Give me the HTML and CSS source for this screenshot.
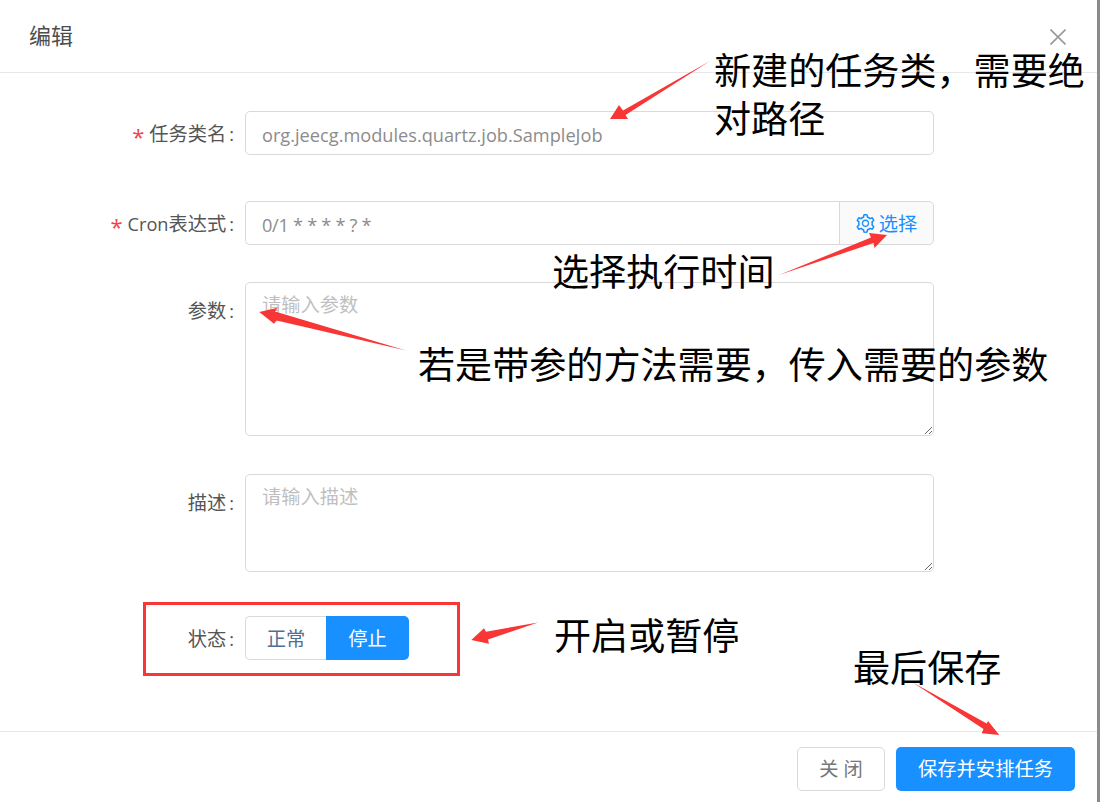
FILE: index.html
```html
<!DOCTYPE html>
<html lang="zh-CN">
<head>
<meta charset="utf-8">
<title>编辑</title>
<link rel="stylesheet" href="styles.css">
</head>
<body>
<div class="shot">
  <section class="modal">
    <header class="modal-head">
      <h1 class="modal-title">编辑</h1>
      <svg class="close-icon" viewBox="0 0 16 16" aria-label="关闭"><path d="M.5.5l15 15M15.500.5l-15 15"/></svg>
    </header>
    <div class="modal-body">
      <div class="row row-first">
        <div class="label"><span class="req">*</span>任务类名<span class="colon">:</span></div>
        <div class="field input value">org.jeecg.modules.quartz.job.SampleJob</div>
      </div>
      <div class="row row-cron">
        <div class="label"><span class="req">*</span><span class="latin">Cron</span>表达式<span class="colon">:</span></div>
        <div class="input-group">
          <div class="field input value joined">0/1 * * * * ? *</div>
          <div class="addon">
            <svg class="gear" viewBox="64 64 896 896"><path d="M924.8 625.7l-65.5-56c3.1-19 4.7-38.4 4.7-57.8s-1.6-38.8-4.7-57.8l65.5-56a32.03 32.03 0 0 0 9.3-35.2l-.9-2.6a443.74 443.74 0 0 0-79.7-137.9l-1.8-2.1a32.12 32.12 0 0 0-35.1-9.5l-81.3 28.9c-30-24.6-63.5-44-99.7-57.6l-15.7-85a32.05 32.05 0 0 0-25.8-25.7l-2.7-.5c-52.1-9.4-106.9-9.4-159 0l-2.7.5a32.05 32.05 0 0 0-25.8 25.7l-15.8 85.4a351.86 351.86 0 0 0-99 57.4l-81.9-29.1a32 32 0 0 0-35.1 9.5l-1.8 2.1a446.02 446.02 0 0 0-79.7 137.9l-.9 2.6c-4.5 12.5-.8 26.5 9.3 35.2l66.3 56.6c-3.1 18.8-4.6 38-4.6 57.1 0 19.2 1.5 38.4 4.6 57.1L99 625.5a32.03 32.03 0 0 0-9.3 35.2l.9 2.6c18.1 50.4 44.9 96.9 79.7 137.9l1.8 2.1a32.12 32.12 0 0 0 35.1 9.5l81.9-29.1c29.8 24.5 63.1 43.9 99 57.4l15.8 85.4a32.05 32.05 0 0 0 25.8 25.7l2.7.5a449.4 449.4 0 0 0 159 0l2.7-.5a32.05 32.05 0 0 0 25.8-25.7l15.7-85a350 350 0 0 0 99.7-57.6l81.3 28.9a32 32 0 0 0 35.1-9.5l1.8-2.1c34.8-41.1 61.6-87.5 79.7-137.9l.9-2.6c4.5-12.3.8-26.3-9.3-35zM788.3 465.9c2.5 15.1 3.8 30.6 3.8 46.1s-1.3 31-3.8 46.1l-6.6 40.1 74.7 63.9a370.03 370.03 0 0 1-42.6 73.6L721 702.8l-31.4 25.8c-23.9 19.6-50.5 35-79.3 45.8l-38.1 14.3-17.9 97a377.5 377.5 0 0 1-85 0l-17.9-97.2-37.8-14.5c-28.5-10.8-55-26.2-78.7-45.7l-31.4-25.9-93.4 33.2c-17-22.9-31.2-47.6-42.6-73.6l75.5-64.5-6.5-40c-2.4-14.9-3.7-30.3-3.7-45.5 0-15.3 1.2-30.6 3.7-45.5l6.5-40-75.5-64.5c11.3-26.1 25.6-50.7 42.6-73.6l93.4 33.2 31.4-25.9c23.7-19.5 50.2-34.9 78.7-45.7l37.9-14.3 17.9-97.2c28.1-3.2 56.8-3.2 85 0l17.9 97 38.1 14.3c28.7 10.8 55.4 26.2 79.3 45.8l31.4 25.8 92.8-32.9c17 22.9 31.2 47.6 42.6 73.6L781.8 426l6.5 39.9zM512 326c-97.2 0-176 78.8-176 176s78.8 176 176 176 176-78.8 176-176-78.8-176-176-176zm79.2 255.2A111.6 111.6 0 0 1 512 614c-29.900 0-58-11.700-79.200-32.800A111.600 111.600 0 0 1 400 502c0-29.900 11.700-58 32.800-79.200C454 401.600 482.100 390 512 390c29.900 0 58 11.600 79.200 32.800A111.600 111.600 0 0 1 624 502c0 29.900-11.700 58-32.800 79.200z"/></svg>
            <span>选择</span>
          </div>
        </div>
      </div>
      <div class="row row-param">
        <div class="label label-area">参数<span class="colon">:</span></div>
        <div class="field input textarea area-param placeholder">请输入参数</div>
      </div>
      <div class="row row-desc">
        <div class="label label-area">描述<span class="colon">:</span></div>
        <div class="field input textarea area-desc placeholder">请输入描述</div>
      </div>
      <div class="row row-status">
        <div class="label">状态<span class="colon">:</span></div>
        <div class="segment">
          <div class="seg seg-off">正常</div>
          <div class="seg seg-on">停止</div>
        </div>
      </div>
    </div>
    <footer class="modal-foot">
      <button class="btn btn-ghost">关 闭</button>
      <button class="btn btn-primary">保存并安排任务</button>
    </footer>
  </section>
  <div class="edge"></div>

  <div class="overlay">
    <div class="mark-box"></div>
    <svg class="arrows" viewBox="0 0 1100 802">
      <polygon points="710,61 623,110.500 619,105 610,119 628,119 625.500,115"/>
      <polygon points="779,275 873.500,243 874.500,248 887,235 869,233 871,237.500"/>
      <polygon points="406,350.500 276.700,320.500 274,323.700 259.300,312 277.700,307.700 275,311.500"/>
      <polygon points="538,622.500 486,631.700 484,628.300 471.300,640 489,643.700 488,639.500"/>
      <polygon points="912,682 983.500,729 981.700,733.300 999.300,735 988,721 986.700,723.500"/>
    </svg>
    <div class="note note-class">新建的任务类，需要绝对路径</div>
    <div class="note note-time">选择执行时间</div>
    <div class="note note-param">若是带参的方法需要，传入需要的参数</div>
    <div class="note note-status">开启或暂停</div>
    <div class="note note-save">最后保存</div>
  </div>
</div>
</body>
</html>
```

FILE: styles.css
```css
* { box-sizing: border-box; }

html, body { margin: 0; padding: 0; background: #fff; }

body {
  font-family: "Open Sans", "Noto Sans CJK SC", sans-serif;
  font-size: 19.250px;
  color: #595959;
}

.shot {
  position: relative;
  display: flex;
  width: 1100px;
  height: 802px;
  overflow: hidden;
}

.modal {
  flex: 1;
  display: flex;
  flex-direction: column;
  background: #fff;
}

.edge { width: 3px; background: #8a8a8a; }

.modal-head {
  height: 73px;
  flex: none;
  display: flex;
  align-items: center;
  justify-content: space-between;
  padding: 0 31px 0 29px;
  border-bottom: 1px solid #e8e8e8;
}

.modal-title {
  margin: 0 0 3px;
  font-size: 22px;
  font-weight: 400;
  line-height: 30px;
  color: #4d4d4d;
}

.close-icon {
  width: 16px;
  height: 16px;
  margin-top: 2px;
  fill: none;
  stroke: #999;
  stroke-width: 1.6;
}

.modal-body {
  flex: 1;
  display: flex;
  flex-direction: column;
  padding: 38px 163px 0 0;
}

.row { display: flex; }
.row-cron { margin-top: 46px; }
.row-param { margin-top: 37px; }
.row-desc { margin-top: 38px; }
.row-status { margin-top: 44px; }

.label {
  width: 245px;
  height: 44px;
  flex: none;
  display: flex;
  justify-content: flex-end;
  align-items: baseline;
  line-height: 46px;
  color: #555;
  white-space: nowrap;
}

.label-area { padding-top: 6px; }

.req {
  align-self: center;
  margin: 6px 5px 0 0;
  font-size: 22px;
  line-height: 22px;
  color: #f5424c;
}

.latin { font-size: 18.200px; }

.colon { margin: 0 11px 0 3px; font-size: 18px; }

.field {
  flex: 1;
  min-width: 0;
  border: 1px solid #d9d9d9;
  border-radius: 5px;
  padding: 0 16px;
  background: #fff;
}

.input { height: 44px; line-height: 46px; }
.value { color: #8c8c8c; white-space: nowrap; font-size: 18.200px; }
.placeholder { color: #bfbfbf; }

.input-group { flex: 1; display: flex; }

.joined {
  border-radius: 5px 0 0 5px;
  border-right: 0;
  letter-spacing: -.3px;
}

.addon {
  width: 95px;
  flex: none;
  display: flex;
  align-items: center;
  justify-content: center;
  gap: 4px;
  border: 1px solid #d9d9d9;
  border-radius: 0 5px 5px 0;
  background: #fafafa;
  color: #1890ff;
}

.gear { width: 19px; height: 19px; fill: currentColor; }

.textarea {
  overflow: auto;
  resize: vertical;
  padding-top: 8px;
  line-height: 28px;
}

.area-param { height: 154px; }
.area-desc { height: 98px; }

.segment { display: flex; width: 164px; height: 44px; }

.seg {
  display: flex;
  align-items: center;
  justify-content: center;
}

.seg-off {
  width: 81px;
  border: 1px solid #d9d9d9;
  border-right: 0;
  border-radius: 5px 0 0 5px;
  color: #4f6f92;
}

.seg-on {
  width: 83px;
  border-radius: 0 5px 5px 0;
  background: #1890ff;
  color: #fff;
}

.modal-foot {
  height: 71px;
  flex: none;
  display: flex;
  justify-content: flex-end;
  gap: 11px;
  padding: 15px 22px 0 0;
  border-top: 1px solid #e8e8e8;
}

.btn {
  height: 44px;
  border-radius: 5px;
  font-family: inherit;
  font-size: 19.300px;
  padding: 0;
  line-height: 1;
}

.btn-ghost {
  width: 88px;
  border: 1px solid #d9d9d9;
  background: #fff;
  color: #777;
}

.btn-primary {
  width: 179px;
  border: 0;
  background: #1890ff;
  color: #fff;
}

.overlay {
  position: absolute;
  inset: 0;
  pointer-events: none;
}

.arrows {
  position: absolute;
  left: 0;
  top: 0;
  width: 1100px;
  height: 802px;
  fill: #f93636;
}

.mark-box {
  position: absolute;
  left: 143px;
  top: 602px;
  width: 317px;
  height: 74px;
  border: 3px solid #f93636;
}

.note {
  position: absolute;
  font-size: 37.100px;
  line-height: 48px;
  color: #000;
}

.note-class { left: 714px; top: 47px; width: 376px; }
.note-time { left: 552px; top: 248px; white-space: nowrap; }
.note-param { left: 418px; top: 341px; white-space: nowrap; }
.note-status { left: 554px; top: 612px; white-space: nowrap; }
.note-save { left: 853px; top: 644px; white-space: nowrap; }
```
